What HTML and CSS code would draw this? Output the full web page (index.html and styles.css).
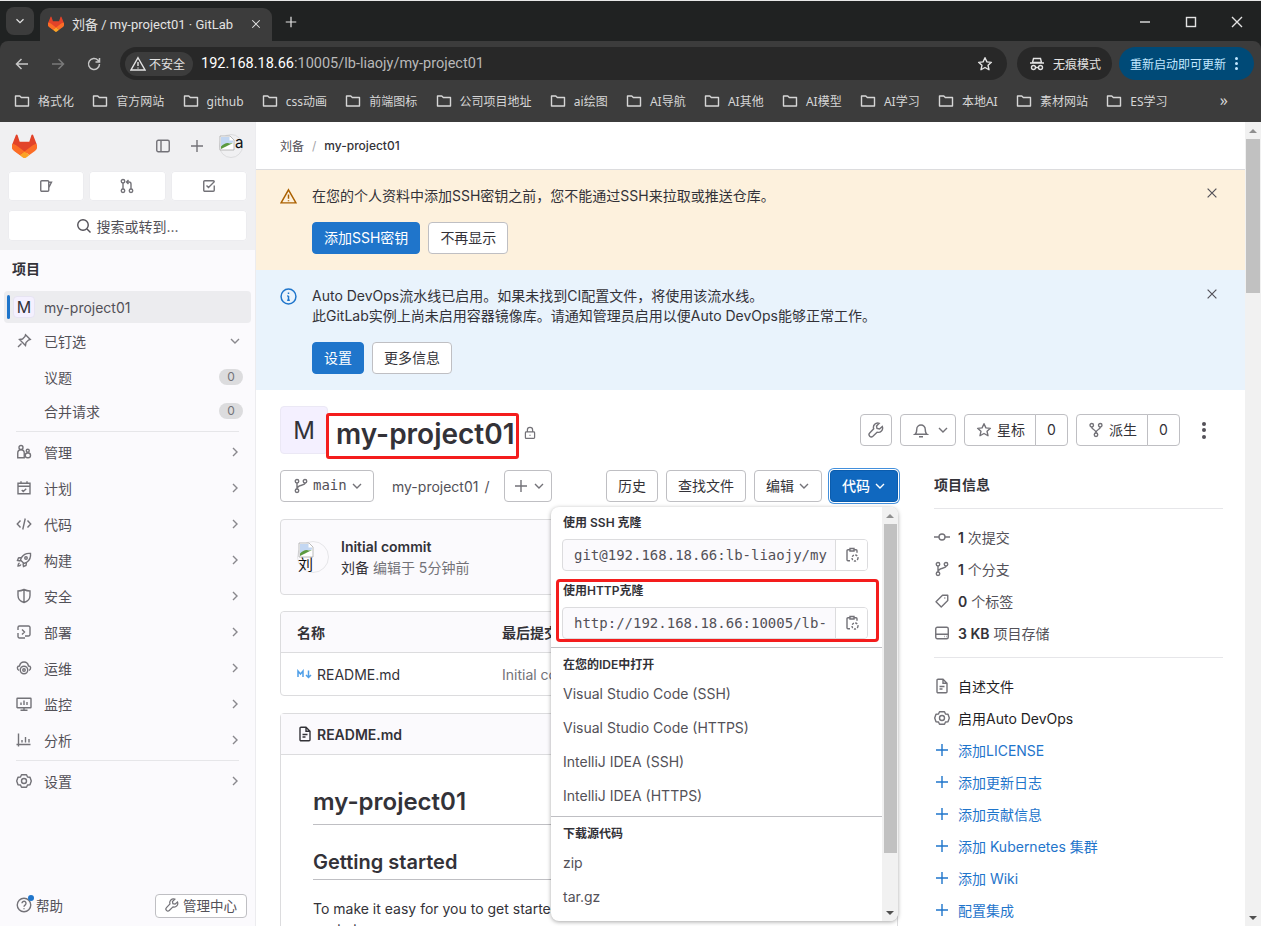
FILE: index.html
```html
<!DOCTYPE html>
<html lang="zh-CN">
<head>
<meta charset="utf-8">
<title>刘备 / my-project01 · GitLab</title>
<link rel="stylesheet" href="styles.css">
</head>
<body>
<svg class="sprite" width="0" height="0" aria-hidden="true">
  <symbol id="fox" viewBox="0 0 25 24"><path fill="#e24329" stroke="none" d="M24.5 9.7 24.4 9.4 21.1.9a.9.9 0 0 0-1.6.1l-2.2 6.800H7.700L5.500 1A.9.9 0 0 0 3.900.9L.6 9.400.5 9.700a6 6 0 0 0 2 7l5 3.700 2.500 1.900 2.500-1.900 5-3.800 5-3.700a6 6 0 0 0 2-3.100z"/><path fill="#fc6d26" stroke="none" d="M24.500 9.700a11 11 0 0 0-4.400 2l-7.600 5.700 4.900 3.700 5.500-4.100a6 6 0 0 0 1.600-7.300z"/><path fill="#fca326" stroke="none" d="m7.600 21.100 2.500 1.900 1.500 1.100a1.300 1.300 0 0 0 1.700 0L15 23l2.500-1.900-5-3.700z"/><path fill="#fc6d26" stroke="none" d="M4.900 11.700a11 11 0 0 0-4.400-2 6 6 0 0 0 1.600 7.300l5.500 4.100 4.900-3.700z"/></symbol>
  <symbol id="issue" viewBox="0 0 16 16"><path d="M2.750 3.750a1 1 0 0 1 1-1h6a1 1 0 0 1 1 1v8.500a1 1 0 0 1-1 1h-6a1 1 0 0 1-1-1zM10.750 4.250h2.750l-2.750 5.500"/></symbol>
  <symbol id="mr" viewBox="0 0 16 16"><circle cx="4" cy="3.250" r="1.750"/><circle cx="4" cy="12.750" r="1.750"/><circle cx="12" cy="12.750" r="1.750"/><path d="M4 5v6M12 11V6a2 2 0 0 0-2-2H8M9.500 2 7.500 4l2 2"/></symbol>
  <symbol id="todo" viewBox="0 0 16 16"><path d="M13.250 7.500v4.750a1 1 0 0 1-1 1h-8.500a1 1 0 0 1-1-1v-8.500a1 1 0 0 1 1-1h8.500a1 1 0 0 1 1 1M5.500 7.500 7.500 9.500l6-6"/></symbol>
  <symbol id="search" viewBox="0 0 16 16"><circle cx="7" cy="7" r="5.250"/><path d="m11 11 3.500 3.500"/></symbol>
  <symbol id="panel" viewBox="0 0 16 16"><rect x="1.750" y="2.250" width="12.500" height="11.500" rx="1.500"/><path d="M6 2.250v11.500"/></symbol>
  <symbol id="plus" viewBox="0 0 16 16"><path d="M8 2v12M2 8h12"/></symbol>
  <symbol id="pin" viewBox="0 0 16 16"><path d="m9.500 1.750 4.750 4.750-1.750.500-2.500 2.500-.500 3-6-6 3-.500 2.500-2.500zM5.500 10.500l-3.500 3.500"/></symbol>
  <symbol id="down" viewBox="0 0 16 16"><path d="m4 6 4 4 4-4"/></symbol>
  <symbol id="right" viewBox="0 0 16 16"><path d="m6 4 4 4-4 4"/></symbol>
  <symbol id="users" viewBox="0 0 16 16"><circle cx="5" cy="3.500" r="2"/><path d="M1.750 13.750V9a3.250 3.250 0 0 1 6.500 0v4.750z"/><circle cx="11.750" cy="6.750" r="1.500"/><rect x="9.250" y="9" width="5.250" height="4.750" rx="2.300"/></symbol>
  <symbol id="calendar" viewBox="0 0 16 16"><path d="M2 3.250h12v10.500H2zM2 6.250h12M5 1.250v2M11 1.250v2M5.750 10l1.500 1.500 3-2.750"/></symbol>
  <symbol id="code" viewBox="0 0 16 16"><path d="M4.500 4.500 1.250 8l3.250 3.500M11.500 4.500 14.750 8l-3.250 3.500M9.250 2.500l-2.500 11"/></symbol>
  <symbol id="rocket" viewBox="0 0 16 16"><path d="M14.500 1.500c-4-.500-7 1-9 4l-1 2.500 3.500 3.500 2.500-1c3-2 4.500-5 4-9zM5.500 5.500 2.500 6l-1 2.500 3 .500M10.500 10.500 10 13.500l-2.500 1-.500-3M3.500 11c-1 .500-1.500 2-1.500 3 1 0 2.500-.500 3-1.500"/><circle cx="10" cy="6" r="1.250"/></symbol>
  <symbol id="shield" viewBox="0 0 16 16"><path d="M8 1.500c2 1 4 1.500 6 1.500v4.500c0 3.500-2.500 6-6 7-3.500-1-6-3.500-6-7V3c2 0 4-.500 6-1.500zM8 1.500v13"/></symbol>
  <symbol id="deploy" viewBox="0 0 16 16"><path d="M2 6V3.500a1.500 1.500 0 0 1 1.500-1.500h9a1.500 1.500 0 0 1 1.500 1.500v7a1.500 1.500 0 0 1-1.500 1.500H9M2 9v3.500A1.500 1.500 0 0 0 3.500 14H9M6 5.500 8.500 8 6 10.500"/></symbol>
  <symbol id="cloud" viewBox="0 0 16 16"><path d="M3 10.500C.500 9 1 6 3.500 6 4 3.500 6 2 8 2s4 1.500 4.500 4C15 6 15.500 9 13 10.500"/><circle cx="8" cy="10" r="3.750"/><circle cx="8" cy="10" r="1.250"/></symbol>
  <symbol id="monitor" viewBox="0 0 16 16"><rect x="1" y="2.250" width="14" height="9.500" rx=".5"/><path d="M8 12v2.250M4.500 14.250h7M5 9V6.500M8 9V4.500M11 9V6"/></symbol>
  <symbol id="chart" viewBox="0 0 16 16"><path d="M2.500 1.500V14.500M.5 12.500h14M6 10.500V8M9.500 10.500V5M13 10.500V7"/></symbol>
  <symbol id="gear" viewBox="0 0 16 16"><path d="M5.500 1.750h5l1 2.200 2.500.3 1.300 3.750-1.300 3.750-2.500.3-1 2.200h-5l-1-2.200-2.500-.3L.7 8 2 4.250l2.500-.3z" stroke-linejoin="round"/><circle cx="8" cy="8" r="2.500"/></symbol>
  <symbol id="help" viewBox="0 0 16 16"><circle cx="8" cy="8" r="6.750"/><path d="M6 6.250a2 2 0 1 1 3.200 1.600C8.400 8.400 8 8.800 8 9.750M8 11.250v1"/></symbol>
  <symbol id="wrench" viewBox="0 0 16 16"><path d="M14.300 4.500 11.500 7 9 6.500 8.500 4l2.700-2.700a4.300 4.300 0 0 0-5.500 5.500L1.700 11a2.300 2.300 0 0 0 3.200 3.300l4.200-4.100a4.300 4.300 0 0 0 5.200-5.700z"/></symbol>
  <symbol id="warn" viewBox="0 0 16 16"><path d="M8 1.750 15 14H1zM8 6v4M8 11.500v1"/></symbol>
  <symbol id="info" viewBox="0 0 16 16"><circle cx="8" cy="8" r="7"/><path d="M8 7.500v4M8 4.250v1.500M6.750 7.500H8M6.750 11.500h2.500"/></symbol>
  <symbol id="close" viewBox="0 0 16 16"><path d="m3 3 10 10M13 3 3 13"/></symbol>
  <symbol id="lock" viewBox="0 0 16 16"><rect x="2.750" y="6.750" width="10.500" height="7.500" rx="1"/><path d="M5 6.750V4.500a3 3 0 0 1 6 0v2.250M8 10v1.250"/></symbol>
  <symbol id="branch" viewBox="0 0 16 16"><circle cx="4" cy="3.250" r="1.750"/><circle cx="4" cy="12.750" r="1.750"/><circle cx="12" cy="3.250" r="1.750"/><path d="M4 5v6M12 5c0 3-8 1.500-8 6"/></symbol>
  <symbol id="bell" viewBox="0 0 16 16"><path d="M2 12.250c1.500-1 1.750-2.500 1.750-5a4.250 4.250 0 0 1 8.500 0c0 2.500.25 4 1.750 5zM6 14.750h4"/></symbol>
  <symbol id="star" viewBox="0 0 16 16"><path d="m8 1.750 1.900 4.100 4.500.5-3.350 3 .950 4.400L8 11.500l-4 2.250.950-4.400-3.350-3 4.500-.5z" stroke-linejoin="round"/></symbol>
  <symbol id="fork" viewBox="0 0 16 16"><circle cx="3.750" cy="3.250" r="1.750"/><circle cx="12.250" cy="3.250" r="1.750"/><circle cx="8" cy="12.750" r="1.750"/><path d="M3.750 5c0 3 4.250 2 4.250 6M12.250 5c0 3-4.250 2-4.250 6"/></symbol>
  <symbol id="commit" viewBox="0 0 16 16"><circle cx="8" cy="8" r="3"/><path d="M0 8h5M11 8h5"/></symbol>
  <symbol id="tag" viewBox="0 0 16 16"><path d="M8.500 2.250h5.250v5.250l-6.500 6.500-5.250-5.250z" stroke-linejoin="round"/><path d="M10.750 4.500v1"/></symbol>
  <symbol id="disk" viewBox="0 0 16 16"><rect x="1.750" y="2.250" width="12.500" height="11.500" rx="1.500"/><path d="M1.750 9.250h12.500M10 11.500h.5M12 11.500h.5"/></symbol>
  <symbol id="file" viewBox="0 0 16 16"><path d="M3 2.250a1 1 0 0 1 1-1h5l4 4v8.500a1 1 0 0 1-1 1H4a1 1 0 0 1-1-1zM9 1.250v4h4M5.500 8.500h5M5.500 11h3"/></symbol>
  <symbol id="copy" viewBox="0 0 16 16"><path d="M6 2.750H4a1 1 0 0 0-1 1v9a1 1 0 0 0 1 1h2M10 2.750h2a1 1 0 0 1 1 1v2M6 1.500h4v2.500H6z"/><circle cx="11" cy="11" r="3" stroke-dasharray="2.200 1.300"/></symbol>
  <symbol id="md" viewBox="0 0 16 10"><path d="M1 8V2l2.500 3L6 2v6M11.500 1.500v7M9 6l2.500 2.500L14 6" stroke="#4f9fe8" stroke-width="1.500"/></symbol>
  <symbol id="folder" viewBox="0 0 16 16"><path d="M1.500 3h4.300l1.500 1.500h7.200v8.500h-13z" stroke-linejoin="round"/></symbol>
  <symbol id="broken" viewBox="0 0 16 16"><path fill="#fff" stroke="#a9a9a9" stroke-width=".8" d="M1 1h10l4 4v10H1z"/><path fill="#c3d7f2" stroke="none" d="M2 2h8.500v3.500H14v2L9 9 2 12z"/><path fill="#5b9a3f" stroke="none" d="M2 11.500c3-3 6-4.500 9-3l3-.5L2 14z"/></symbol>
  <symbol id="incog" viewBox="0 0 16 16"><path d="M4.500 2.500h7l1 4h-9zM1 7h14" /><circle cx="4.500" cy="11.500" r="2"/><circle cx="11.500" cy="11.500" r="2"/><path d="M6.500 11.500h3"/></symbol>
</svg>

<header class="browser">
  <div class="tabstrip">
    <div class="tabs-menu"><svg class="icon i14"><use href="#down"/></svg></div>
    <div class="tab">
      <svg class="icon i16"><use href="#fox"/></svg>
      <span class="tab-title">刘备 / my-project01 · GitLab</span>
      <svg class="icon i12"><use href="#close"/></svg>
    </div>
    <svg class="icon i14 new-tab"><use href="#plus"/></svg>
    <div class="winctl">
      <svg class="icon i12"><path d="M1 6h10"/></svg>
      <svg class="icon i12"><rect x="1.500" y="1.500" width="9" height="9"/></svg>
      <svg class="icon i12"><path d="m1 1 10 10M11 1 1 11"/></svg>
    </div>
  </div>
  <div class="toolbar">
    <svg class="nav-ico" viewBox="0 0 16 16"><path d="M14 8H2.500M7.500 3l-5 5 5 5"/></svg>
    <svg class="nav-ico dim" viewBox="0 0 16 16"><path d="M2 8h11.500M8.500 3l5 5-5 5"/></svg>
    <svg class="nav-ico" viewBox="0 0 16 16"><path d="M13.500 8A5.500 5.500 0 1 1 12 4.200L13.500 6M13.500 2v4h-4"/></svg>
    <div class="omnibox">
      <div class="chip"><svg class="icon i16"><use href="#warn"/></svg><span>不安全</span></div>
      <div class="url"><b>192.168.18.66</b>:10005/lb-liaojy/my-project01</div>
      <svg class="icon i16 fav"><use href="#star"/></svg>
    </div>
    <div class="incognito"><svg class="icon i16"><use href="#incog"/></svg><span>无痕模式</span></div>
    <div class="update"><span>重新启动即可更新</span><span class="dots"><i></i><i></i><i></i></span></div>
  </div>
  <div class="bookmarks">
    <div class="bm"><svg class="icon i16"><use href="#folder"/></svg>格式化</div>
    <div class="bm"><svg class="icon i16"><use href="#folder"/></svg>官方网站</div>
    <div class="bm"><svg class="icon i16"><use href="#folder"/></svg>github</div>
    <div class="bm"><svg class="icon i16"><use href="#folder"/></svg>css动画</div>
    <div class="bm"><svg class="icon i16"><use href="#folder"/></svg>前端图标</div>
    <div class="bm"><svg class="icon i16"><use href="#folder"/></svg>公司项目地址</div>
    <div class="bm"><svg class="icon i16"><use href="#folder"/></svg>ai绘图</div>
    <div class="bm"><svg class="icon i16"><use href="#folder"/></svg>AI导航</div>
    <div class="bm"><svg class="icon i16"><use href="#folder"/></svg>AI其他</div>
    <div class="bm"><svg class="icon i16"><use href="#folder"/></svg>AI模型</div>
    <div class="bm"><svg class="icon i16"><use href="#folder"/></svg>AI学习</div>
    <div class="bm"><svg class="icon i16"><use href="#folder"/></svg>本地AI</div>
    <div class="bm"><svg class="icon i16"><use href="#folder"/></svg>素材网站</div>
    <div class="bm"><svg class="icon i16"><use href="#folder"/></svg>ES学习</div>
    <div class="bm-more">»</div>
  </div>
</header>

<div class="app">
  <aside class="sidebar">
    <div class="side-top">
      <div class="side-head">
        <svg class="logo"><use href="#fox"/></svg>
        <div class="side-tools">
          <svg class="icon i16"><use href="#panel"/></svg>
          <svg class="icon i16"><use href="#plus"/></svg>
          <div class="side-avatar"><svg class="icon i16"><use href="#broken"/></svg><span>a</span></div>
        </div>
      </div>
      <div class="side-btns">
        <div class="side-btn"><svg class="icon i16"><use href="#issue"/></svg></div>
        <div class="side-btn"><svg class="icon i16"><use href="#mr"/></svg></div>
        <div class="side-btn"><svg class="icon i16"><use href="#todo"/></svg></div>
      </div>
      <div class="side-search"><svg class="icon i16"><use href="#search"/></svg><span>搜索或转到...</span></div>
    </div>
    <div class="side-label">项目</div>
    <div class="side-active"><span class="bar"></span><span class="mini-m">M</span><span>my-project01</span></div>
    <nav class="side-nav">
      <div class="nav-item"><svg class="icon i16"><use href="#pin"/></svg><span>已钉选</span><svg class="icon i16 chev"><use href="#down"/></svg></div>
      <div class="nav-item sub"><span>议题</span><span class="count">0</span></div>
      <div class="nav-item sub sub2"><span>合并请求</span><span class="count">0</span></div>
      <div class="divider"></div>
      <div class="nav-item"><svg class="icon i16"><use href="#users"/></svg><span>管理</span><svg class="icon i16 chev"><use href="#right"/></svg></div>
      <div class="nav-item"><svg class="icon i16"><use href="#calendar"/></svg><span>计划</span><svg class="icon i16 chev"><use href="#right"/></svg></div>
      <div class="nav-item"><svg class="icon i16"><use href="#code"/></svg><span>代码</span><svg class="icon i16 chev"><use href="#right"/></svg></div>
      <div class="nav-item"><svg class="icon i16"><use href="#rocket"/></svg><span>构建</span><svg class="icon i16 chev"><use href="#right"/></svg></div>
      <div class="nav-item"><svg class="icon i16"><use href="#shield"/></svg><span>安全</span><svg class="icon i16 chev"><use href="#right"/></svg></div>
      <div class="nav-item"><svg class="icon i16"><use href="#deploy"/></svg><span>部署</span><svg class="icon i16 chev"><use href="#right"/></svg></div>
      <div class="nav-item"><svg class="icon i16"><use href="#cloud"/></svg><span>运维</span><svg class="icon i16 chev"><use href="#right"/></svg></div>
      <div class="nav-item"><svg class="icon i16"><use href="#monitor"/></svg><span>监控</span><svg class="icon i16 chev"><use href="#right"/></svg></div>
      <div class="nav-item"><svg class="icon i16"><use href="#chart"/></svg><span>分析</span><svg class="icon i16 chev"><use href="#right"/></svg></div>
      <div class="divider"></div>
      <div class="nav-item"><svg class="icon i16"><use href="#gear"/></svg><span>设置</span><svg class="icon i16 chev"><use href="#right"/></svg></div>
    </nav>
    <div class="side-foot">
      <div class="help"><span class="help-ico"><svg class="icon i16"><use href="#help"/></svg><i class="help-dot"></i></span><span>帮助</span></div>
      <div class="admin"><svg class="icon i14"><use href="#wrench"/></svg><span>管理中心</span></div>
    </div>
  </aside>

  <main class="main">
    <div class="crumbs"><span>刘备</span><span class="slash">/</span><strong>my-project01</strong></div>
    <section class="banner warn">
      <svg class="icon i16 b-ico"><use href="#warn"/></svg>
      <div class="b-body">
        <p>在您的个人资料中添加SSH密钥之前，您不能通过SSH来拉取或推送仓库。</p>
        <div class="b-actions"><span class="btn primary">添加SSH密钥</span><span class="btn">不再显示</span></div>
      </div>
      <svg class="icon i16 b-close"><use href="#close"/></svg>
    </section>
    <section class="banner info">
      <svg class="icon i16 b-ico"><use href="#info"/></svg>
      <div class="b-body">
        <p>Auto DevOps流水线已启用。如果未找到CI配置文件，将使用该流水线。<br>此GitLab实例上尚未启用容器镜像库。请通知管理员启用以便Auto DevOps能够正常工作。</p>
        <div class="b-actions"><span class="btn primary">设置</span><span class="btn">更多信息</span></div>
      </div>
      <svg class="icon i16 b-close"><use href="#close"/></svg>
    </section>

    <div class="page">
      <div class="proj-head">
        <div class="proj-avatar">M</div>
        <h1 class="proj-name">my-project01<span class="mark"></span></h1>
        <svg class="icon i14 proj-lock"><use href="#lock"/></svg>
        <div class="proj-actions">
          <span class="btn icon-btn"><svg class="icon i16"><use href="#wrench"/></svg></span>
          <span class="btn icon-btn bell"><svg class="icon i16"><use href="#bell"/></svg><svg class="icon i12"><use href="#down"/></svg></span>
          <span class="btn-group"><span class="btn g-l"><svg class="icon i16"><use href="#star"/></svg>星标</span><span class="btn g-r">0</span></span>
          <span class="btn-group"><span class="btn g-l"><svg class="icon i16"><use href="#fork"/></svg>派生</span><span class="btn g-r">0</span></span>
          <span class="kebab"><i></i><i></i><i></i></span>
        </div>
      </div>

      <div class="repo">
        <div class="repo-left">
          <div class="tree-bar">
            <span class="btn branch"><svg class="icon i16"><use href="#branch"/></svg><span class="mono">main</span><svg class="icon i12"><use href="#down"/></svg></span>
            <span class="path">my-project01</span><span class="path-sep">/</span>
            <span class="btn plus"><svg class="icon i16"><use href="#plus"/></svg><svg class="icon i12"><use href="#down"/></svg></span>
            <span class="tree-right">
              <span class="btn">历史</span>
              <span class="btn">查找文件</span>
              <span class="btn">编辑<svg class="icon i12"><use href="#down"/></svg></span>
              <span class="btn primary focus">代码<svg class="icon i12"><use href="#down"/></svg></span>
            </span>
          </div>

          <div class="commit">
            <div class="commit-avatar"><svg class="icon i16"><use href="#broken"/></svg><span>刘</span></div>
            <div class="commit-text">
              <strong>Initial commit</strong>
              <div class="commit-meta"><span>刘备</span> <em>编辑于 5分钟前</em></div>
            </div>
          </div>

          <div class="table">
            <div class="t-head"><span class="col-a">名称</span><span>最后提交</span></div>
            <div class="t-row"><span class="col-a"><svg class="md"><use href="#md"/></svg>README.md</span><span class="muted">Initial commit</span></div>
          </div>

          <div class="readme">
            <div class="readme-head"><svg class="icon i16"><use href="#file"/></svg>README.md</div>
            <article class="readme-body">
              <h2>my-project01</h2>
              <h3>Getting started</h3>
              <p>To make it easy for you to get started with GitLab, here's a list of recommended next steps.</p>
            </article>
          </div>

          <div class="dropdown">
            <div class="dd-content">
              <div class="dd-title">使用 SSH 克隆</div>
              <div class="clone"><span class="clone-url">git@192.168.18.66:lb-liaojy/my</span><span class="clone-btn"><svg class="icon i16"><use href="#copy"/></svg></span></div>
              <div class="dd-title http">使用HTTP克隆</div>
              <div class="clone"><span class="clone-url">http://192.168.18.66:10005/lb-</span><span class="clone-btn"><svg class="icon i16"><use href="#copy"/></svg></span></div>
              <span class="mark-http"></span>
              <div class="dd-rule"></div>
              <div class="dd-title">在您的IDE中打开</div>
              <div class="dd-item">Visual Studio Code (SSH)</div>
              <div class="dd-item">Visual Studio Code (HTTPS)</div>
              <div class="dd-item">IntelliJ IDEA (SSH)</div>
              <div class="dd-item">IntelliJ IDEA (HTTPS)</div>
              <div class="dd-rule"></div>
              <div class="dd-title">下载源代码</div>
              <div class="dd-item">zip</div>
              <div class="dd-item">tar.gz</div>
            </div>
            <div class="dd-scroll"><span class="arr up"></span><span class="dd-thumb"></span><span class="arr dn"></span></div>
          </div>
        </div>

        <aside class="repo-right">
          <div class="info-title">项目信息</div>
          <div class="info-list first">
            <div class="info-row"><svg class="icon i16"><use href="#commit"/></svg><span><b>1</b> 次提交</span></div>
            <div class="info-row"><svg class="icon i16"><use href="#branch"/></svg><span><b>1</b> 个分支</span></div>
            <div class="info-row"><svg class="icon i16"><use href="#tag"/></svg><span><b>0</b> 个标签</span></div>
            <div class="info-row"><svg class="icon i16"><use href="#disk"/></svg><span><b>3 KB</b> 项目存储</span></div>
          </div>
          <div class="info-list">
            <div class="info-row dark"><svg class="icon i16"><use href="#file"/></svg><span>自述文件</span></div>
            <div class="info-row dark"><svg class="icon i16"><use href="#gear"/></svg><span>启用Auto DevOps</span></div>
            <div class="info-row link"><svg class="icon i16"><use href="#plus"/></svg><span>添加LICENSE</span></div>
            <div class="info-row link"><svg class="icon i16"><use href="#plus"/></svg><span>添加更新日志</span></div>
            <div class="info-row link"><svg class="icon i16"><use href="#plus"/></svg><span>添加贡献信息</span></div>
            <div class="info-row link"><svg class="icon i16"><use href="#plus"/></svg><span>添加 Kubernetes 集群</span></div>
            <div class="info-row link"><svg class="icon i16"><use href="#plus"/></svg><span>添加 Wiki</span></div>
            <div class="info-row link"><svg class="icon i16"><use href="#plus"/></svg><span>配置集成</span></div>
          </div>
        </aside>
      </div>
    </div>
  </main>

  <div class="pagebar"><span class="arr up"></span><span class="page-thumb"></span><span class="arr dn"></span></div>
</div>
</body>
</html>
```
FILE: styles.css
```css
* { box-sizing: border-box; }
html, body { margin: 0; height: 926px; overflow: hidden; }
body {
  font-family: Inter, "Noto Sans CJK SC", sans-serif;
  font-size: 14px;
  color: #333238;
  background: #fff;
  display: flex;
  flex-direction: column;
}
.sprite { position: absolute; }
.icon { fill: none; stroke: currentColor; stroke-width: 1.4; flex: none; display: block; }
.i16 { width: 16px; height: 16px; }
.i14 { width: 14px; height: 14px; }
.i12 { width: 12px; height: 12px; }

/* browser chrome */
.browser {
  height: 122px;
  flex: none;
  background: #202222;
  border-top: 1px solid #e8e8e8;
  font-family: Roboto, "Noto Sans CJK SC", sans-serif;
  color: #e3e3e3;
}
.tabstrip { height: 40px; display: flex; align-items: flex-end; position: relative; }
.tabs-menu {
  width: 28px; height: 28px; margin: 0 6px 6px 6px;
  border-radius: 8px; background: #3c3c3c;
  display: flex; align-items: center; justify-content: center;
}
.tab {
  width: 232px; height: 33px; background: #3c3c3c;
  border-radius: 9px 9px 0 0;
  display: flex; align-items: center;
  padding: 0 10px 2px 8px; font-size: 12px; gap: 8px;
}
.tab-title { flex: 1; white-space: nowrap; font-size: 13px; }
.new-tab { margin: 0 0 12px 12px; }
.winctl { margin-left: auto; display: flex; gap: 34px; padding: 0 18px 13px 0; }
.toolbar {
  height: 46px; background: #3c3c3c;
  border-radius: 8px 8px 0 0;
  display: flex; align-items: flex-start;
  padding: 6px 7px 0 14px;
}
.nav-ico { width: 16px; height: 16px; fill: none; stroke: #c7c7c7; stroke-width: 1.5; margin: 9px 20px 0 0; flex: none; }
.nav-ico.dim { stroke: #7a7a7a; }
.omnibox {
  width: 887px; height: 33px; margin-left: -2px; border-radius: 17px;
  background: #282828; display: flex; align-items: center; padding: 0 14px 0 5px;
}
.chip {
  height: 24px; width: 68px; border-radius: 12px; background: #3c3c3c;
  display: flex; align-items: center; gap: 3px; padding-left: 5px; font-size: 12px; flex: none;
}
.url { margin-left: 8px; font-size: 14.500px; color: #b9b9b9; white-space: nowrap; flex: 1; }
.url b { color: #fff; font-weight: 400; }
.incognito {
  margin-left: 10px; width: 95px; height: 33px; border-radius: 17px; background: #282828;
  display: flex; align-items: center; gap: 8px; padding-left: 12px; font-size: 12px; flex: none;
}
.update {
  margin-left: 7px; width: 135px; height: 33px; border-radius: 17px; background: #004a77;
  display: flex; align-items: center; padding-left: 11px; font-size: 12px; color: #c2e7ff; flex: none; gap: 9px;
}
.dots { display: flex; flex-direction: column; gap: 2px; }
.dots i { width: 3px; height: 3px; border-radius: 50%; background: #c2e7ff; display: block; }
.bookmarks {
  height: 35px; background: #3c3c3c;
  display: flex; align-items: flex-start; gap: 18.250px;
  padding: 6px 33px 0 14px; font-size: 12px; color: #d6d6d6;
  font-family: "Noto Sans", "Noto Sans CJK SC", sans-serif;
}
.bm { display: flex; align-items: center; gap: 8px; height: 16px; white-space: nowrap; }
.bm-more { margin-left: auto; font-size: 16px; line-height: 16px; margin-top: -1px; }

/* app */
.app { flex: 1; display: flex; min-height: 0; }
.sidebar {
  width: 256px; flex: none; background: #fbfafd;
  border-right: 1px solid #ececef;
  display: flex; flex-direction: column;
}
.side-top { height: 128px; background: #f0f0f2; padding: 12px 8px 0; flex: none; }
.side-head { display: flex; align-items: center; justify-content: space-between; height: 24px; padding: 0 4px 0 4px; }
.logo { width: 25px; height: 24px; }
.side-tools { display: flex; align-items: center; color: #737278; gap: 18px; }
.side-avatar {
  width: 24px; height: 24px; border-radius: 50%; border: 1px solid #dcdcde;
  display: flex; font-size: 15px; color: #111; line-height: 16px; margin-left: -4px; white-space: nowrap;
}
.side-avatar .icon { margin-left: -1px; }
.side-btns { display: flex; gap: 5px; margin-top: 13px; }
.side-btn {
  flex: 1; height: 30px; background: #fff; border-radius: 4px;
  box-shadow: 0 0 0 1px #ececef inset;
  display: flex; align-items: center; justify-content: center; color: #737278;
}
.side-search {
  margin-top: 9px; height: 31px; background: #fff; border-radius: 4px;
  box-shadow: 0 0 0 1px #ececef inset;
  display: flex; align-items: center; justify-content: center; gap: 4px; color: #535158; font-size: 14px;
}
.side-label { height: 41px; padding: 9px 0 0 12px; font-weight: 600; color: #333238; line-height: 20px; flex: none; }
.side-active {
  margin: 0 4px; height: 32px; width: 247px; background: #ececef; border-radius: 4px;
  display: flex; align-items: center; color: #535158; flex: none;
}
.bar { width: 3px; height: 24px; background: #1f75cb; border-radius: 2px; margin-left: 3px; }
.mini-m {
  width: 22px; height: 22px; background: #f4f0ff; border: 1px solid #e7e4f2; border-radius: 4px;
  margin: 0 9px 0 3px; display: flex; align-items: center; justify-content: center; color: #333238; font-size: 16px;
}
.nav-item {
  height: 36px; display: flex; align-items: center; gap: 12px;
  padding: 0 12px 0 16px; color: #535158;
}
.nav-item .icon { color: #737278; }
.nav-item .chev { margin-left: auto; color: #89888d; }
.nav-item.sub { padding-left: 44px; justify-content: space-between; }
.nav-item.sub2 { height: 32px; margin-bottom: 4px; }
.count {
  width: 24px; height: 16px; border-radius: 8px; background: #dcdcde; color: #737278;
  font-size: 12px; line-height: 16px; text-align: center;
}
.divider { height: 1px; margin: 2px 16px; background: #e6e6e9; }
.side-foot {
  margin-top: auto; display: flex; align-items: center; justify-content: space-between;
  padding: 0 8px 8px 16px;
}
.help { display: flex; align-items: center; gap: 4px; color: #535158; font-size: 13.500px; padding-bottom: 2px; }
.help-ico { position: relative; color: #737278; }
.help-dot { position: absolute; right: -2px; top: -2px; width: 6px; height: 6px; background: #1f75cb; border-radius: 50%; }
.admin {
  width: 92px; height: 24px; border: 1px solid #bfbfc3; border-radius: 4px; padding-bottom: 2px;
  display: flex; align-items: center; justify-content: center; gap: 4px; color: #535158; background: #fff; font-size: 13.500px;
}
.admin .icon { color: #737278; }

/* main */
.main { flex: 1; min-width: 0; overflow: hidden; }
.crumbs {
  height: 48px; border-bottom: 1px solid #dcdcde; padding: 0 0 0 24px;
  display: flex; align-items: center; font-size: 12px; color: #535158;
}
.slash { margin: 0 8px; color: #a4a3a8; }
.crumbs strong { color: #333238; font-weight: 500; }
.banner { display: flex; padding: 17px 24px 0 24px; position: relative; }
.banner.warn { height: 100px; background: #fdf1dd; }
.banner.info { height: 120px; background: #e9f3fc; }
.b-ico { margin: 1px 15px 0 0; width: 17px; height: 17px; }
.warn .b-ico { color: #ab6100; }
.info .b-ico { color: #1f75cb; }
.b-body { flex: 1; }
.b-body p { margin: -1px 0 0; line-height: 20px; color: #333238; }
.b-actions { display: flex; gap: 8px; margin-top: 16px; }
.b-close { position: absolute; right: 26px; top: 16px; width: 14px; height: 14px; color: #535158; }
.info .b-close { top: 17px; }
.btn {
  height: 32px; padding: 0 11px 2px; display: inline-flex; align-items: center; gap: 4px;
  background: #fff; border-radius: 4px; border: 1px solid #bfbfc3; color: #333238; white-space: nowrap;
}
.btn .icon { color: #737278; margin-top: 2px; }
.btn .i12 { width: 16px; height: 16px; margin-left: -2px; margin-right: -2px; }
.btn.primary { background: #1f75cb; border-color: #1f75cb; color: #fff; }
.btn.primary .icon { color: #fff; }
.btn.focus { background: #1068bf; border-color: #0b5cad; box-shadow: 0 0 0 1px #fff, 0 0 0 2px #428fdc; font-weight: 500; }

.page { padding: 16px 22px 0 24px; }
.proj-head { display: flex; align-items: center; height: 48px; }
.proj-avatar {
  width: 48px; height: 48px; border-radius: 4px; background: #f4f0ff; border: 1px solid #ebe8f5;
  display: flex; align-items: center; justify-content: center; font-size: 24px; color: #333238; flex: none;
}
.proj-name { position: relative; margin: 8px 0 0 8px; font-size: 28px; line-height: 36px; font-weight: 600; color: #333238; }
.mark { position: absolute; left: -10px; right: -4px; top: -3px; bottom: -7px; border: 3px solid #f41d1d; border-radius: 3px; }
.proj-lock { margin: 6px 0 0 8px; color: #737278; }
.proj-actions { margin-left: auto; display: flex; align-items: center; gap: 8px; }
.btn.icon-btn { padding: 0 7px 2px; }
.btn.bell { padding: 0 6px 2px 12px; gap: 8px; }
.btn-group { display: inline-flex; }
.btn.g-l { border-radius: 4px 0 0 4px; width: 72px; padding: 0 0 2px 11px; gap: 5px; }
.btn.g-r { border-radius: 0 4px 4px 0; margin-left: -1px; width: 33px; justify-content: center; padding: 0 0 2px; }
.kebab { width: 32px; display: flex; flex-direction: column; align-items: center; gap: 2.500px; margin-right: 3px; }
.kebab i { width: 4px; height: 4px; background: #535158; border-radius: 50%; display: block; }

.repo { display: flex; gap: 36px; margin-top: 16px; }
.repo-left { width: 618px; flex: none; position: relative; }
.tree-bar { display: flex; align-items: center; height: 32px; }
.btn.branch { padding: 0 8px 2px 12px; width: 94px; gap: 4px; }
.mono { font-family: "DejaVu Sans Mono", monospace; font-size: 14px; color: #535158; }
.path { margin-left: 18px; color: #535158; }
.path-sep { margin: 0 14px 0 6px; color: #535158; }
.btn.plus { width: 48px; padding: 0 0 2px 8px; gap: 4px; }
.tree-right { margin-left: auto; display: flex; gap: 8px; }
.commit {
  margin-top: 17px; height: 76px; border: 1px solid #dcdcde; border-radius: 4px; background: #fbfafd;
  display: flex; align-items: center; padding: 0 16px; gap: 12px;
}
.commit-avatar {
  width: 32px; height: 32px; border-radius: 50%; border: 1px solid #e6e6e9;
  line-height: 14px; font-size: 15px; color: #111; flex: none;
}
.commit-text strong { display: block; font-weight: 600; line-height: 20px; color: #333238; }
.commit-meta { line-height: 20px; margin-top: 1px; }
.commit-meta em { font-style: normal; color: #737278; }
.table { margin-top: 16px; border: 1px solid #dcdcde; border-radius: 4px; }
.t-head {
  height: 41px; background: #fbfafd; border-bottom: 1px solid #dcdcde; border-radius: 4px 4px 0 0;
  display: flex; align-items: center; padding: 0 16px; font-weight: 600;
}
.t-row { height: 42px; display: flex; align-items: center; padding: 0 16px; }
.col-a { width: 205px; display: flex; align-items: center; gap: 4px; }
.md { width: 16px; height: 10px; fill: none; }
.muted { color: #737278; }
.readme { margin-top: 17px; border: 1px solid #dcdcde; border-radius: 4px 4px 0 0; height: 300px; }
.readme-head {
  height: 41px; background: #fbfafd; border-bottom: 1px solid #dcdcde;
  display: flex; align-items: center; gap: 4px; padding: 0 16px; font-weight: 600;
}
.readme-body { padding: 29px 32px 0; }
.readme-body h2 {
  margin: 0; font-size: 24px; font-weight: 600; line-height: 36px; padding-bottom: 4px;
  border-bottom: 1px solid #bfbfc3; color: #333238;
}
.readme-body h3 {
  margin: 21px 0 0; font-size: 20px; font-weight: 600; line-height: 32px; padding-bottom: 1px;
  border-bottom: 1px solid #bfbfc3; color: #333238;
}
.readme-body p { margin: 19px 0 0; line-height: 20px; font-size: 14px; }

.dropdown {
  position: absolute; left: 271px; top: 37px; width: 347px; height: 414px;
  background: #fff; border-radius: 8px; box-shadow: 0 1px 4px rgba(0,0,0,.35);
  display: flex; overflow: hidden; z-index: 5;
}
.dd-content { flex: 1; position: relative; min-width: 0; padding-top: 8px; }
.dd-title { font-size: 12px; font-weight: 600; line-height: 16px; padding: 0 12px; color: #333238; }
.dd-title.http { margin-top: 12px; }
.clone {
  margin: 8px 14px 0 11px; height: 32px; border: 1px solid #dcdcde; border-radius: 4px;
  display: flex; background: #fbfafd; overflow: hidden;
}
.clone-url { flex: 1; padding-left: 11px; font-family: "DejaVu Sans Mono", monospace; line-height: 30px; color: #535158; white-space: nowrap; overflow: hidden; }
.clone-btn { width: 32px; flex: none; background: #fff; border-left: 1px solid #dcdcde; display: flex; align-items: center; justify-content: center; color: #737278; }
.mark-http { position: absolute; left: 5px; top: 72px; width: 323px; height: 63px; border: 3px solid #f41d1d; border-radius: 4px; }
.dd-rule { height: 1px; background: #bfbfc3; margin-top: 8px; }
.dd-item + .dd-rule { margin-top: 3px; }
.dd-rule + .dd-title { margin-top: 9px; }
.dd-title + .dd-item { margin-top: 4px; }
.dd-item { height: 34px; line-height: 34px; padding: 0 12px; color: #535158; }
.dd-scroll { width: 16px; flex: none; background: #f1f1f1; display: flex; flex-direction: column; align-items: center; }
.dd-thumb { width: 13px; height: 329px; background: #c1c1c1; margin-top: 6px; }
.arr { width: 0; height: 0; border-left: 4px solid transparent; border-right: 4px solid transparent; display: block; flex: none; }
.arr.up { border-bottom: 4px solid #8f8f8f; margin-top: 7px; }
.arr.dn { border-top: 4px solid #505050; margin-top: auto; margin-bottom: 6px; }

.repo-right { width: 289px; flex: none; }
.info-title { height: 39px; line-height: 30px; font-weight: 600; border-bottom: 1px solid #e6e6e9; color: #333238; }
.info-list { border-bottom: 1px solid #e6e6e9; padding: 12px 0 8px; }
.info-list + .info-list { border-bottom: 0; }
.info-row { height: 32px; display: flex; align-items: center; gap: 8px; color: #535158; white-space: nowrap; }
.info-row b { font-weight: 600; color: #333238; }
.info-row .icon { color: #737278; }
.info-row.dark { color: #1f1e24; }
.info-row.link { color: #1f75cb; }
.info-row.link .icon { color: #1f75cb; }

.pagebar { width: 16px; flex: none; background: #f1f1f1; display: flex; flex-direction: column; align-items: center; }
.page-thumb { width: 14px; height: 154px; background: #c1c1c1; margin-top: 6px; }
```
